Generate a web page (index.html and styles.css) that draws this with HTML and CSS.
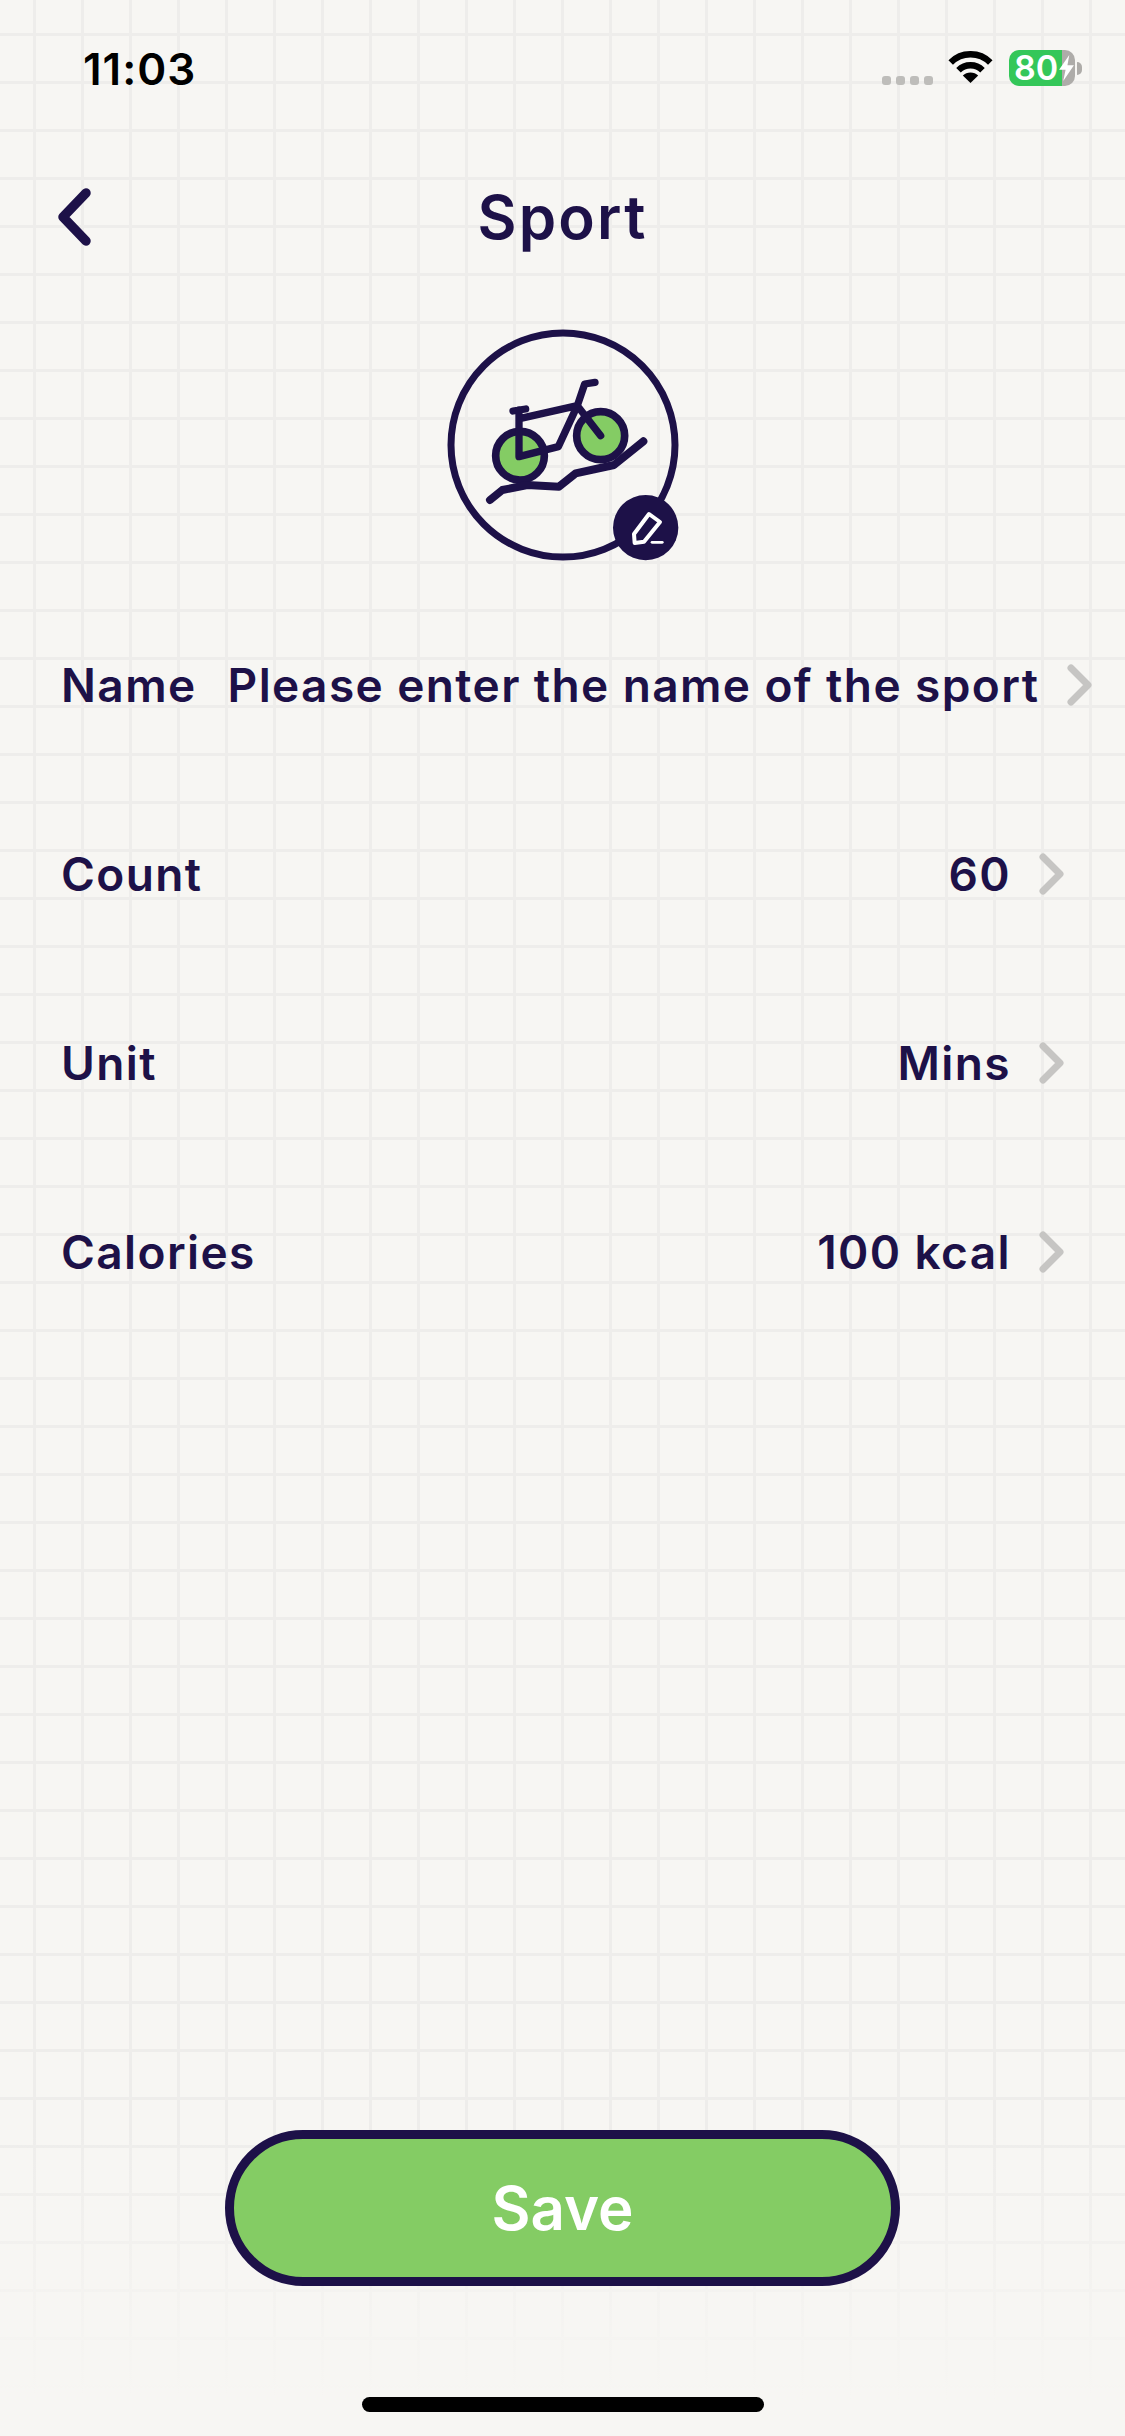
FILE: index.html
```html
<!DOCTYPE html>
<html lang="en">
<head>
<meta charset="utf-8">
<title>Sport</title>
<link rel="stylesheet" href="styles.css">
</head>
<body>
<main class="screen">
  <header class="status">
    <span class="time">11:03</span>
    <div class="status-icons">
      <div class="dots"><i></i><i></i><i></i><i></i></div>
      <svg class="wifi" viewBox="0 0 45 32" aria-hidden="true">
        <path d="M2.7 11.4A28 28 0 0 1 42.3 11.4M10.5 19.2A17 17 0 0 1 34.5 19.2" fill="none" stroke="#000" stroke-width="6.4"/>
        <path d="M22.5 32L14.8 24.6A11 11 0 0 1 30.2 24.6Z" fill="#000"/>
      </svg>
      <div class="battery">
        <div class="battery-body"><span class="battery-level">80</span>
          <svg class="bolt" viewBox="0 0 16 28" aria-hidden="true"><path d="M11 0L0 16H7L4.500 28L16 11H9Z" fill="#fff"/></svg>
        </div>
        <span class="battery-cap"></span>
      </div>
    </div>
  </header>

  <nav class="nav">
    <svg class="back" viewBox="0 0 36 62" aria-hidden="true"><path d="M28 7L5 31L28 55" fill="none" stroke="#1d1148" stroke-width="9.500" stroke-linecap="round" stroke-linejoin="round"/></svg>
    <h1 class="title">Sport</h1>
  </nav>

  <div class="avatar">
    <svg viewBox="-8 0 810 810" aria-hidden="true">
      <circle cx="397" cy="405" r="336" fill="none" stroke="#1d1148" stroke-width="21"/>
      <g fill="#84cc64" stroke="#1d1148" stroke-width="23">
        <circle cx="268" cy="437" r="73"/>
        <circle cx="510" cy="377" r="72"/>
      </g>
      <g fill="none" stroke="#1d1148" stroke-width="22" stroke-linecap="round" stroke-linejoin="round">
        <path d="M247 303L285 297M265 300V440L383 410L440 287M270 325L440 287L510 377M440 287L462 222L493 217"/>
        <path d="M178 570L215 540L290 525L385 530L435 490L550 465L638 394" stroke-width="24"/>
      </g>
      <circle cx="645" cy="653" r="98" fill="#1d1148"/>
      <g fill="none" stroke="#fff" stroke-width="12" stroke-linejoin="round" stroke-linecap="round">
        <path d="M610 672L655 612L688 636L640 695L612 699Z"/>
        <path d="M664 697H695" stroke-width="8"/>
      </g>
    </svg>
  </div>

  <section class="rows">
    <div class="row">
      <span class="label">Name</span>
      <span class="value">Please enter the name of the sport</span>
      <svg class="chev" viewBox="0 0 26 42" aria-hidden="true"><path d="M4 4L21 21L4 38" fill="none" stroke="#c6c5c3" stroke-width="7" stroke-linecap="round" stroke-linejoin="round"/></svg>
    </div>
    <div class="row">
      <span class="label">Count</span>
      <span class="value">60</span>
      <svg class="chev" viewBox="0 0 26 42" aria-hidden="true"><path d="M4 4L21 21L4 38" fill="none" stroke="#c6c5c3" stroke-width="7" stroke-linecap="round" stroke-linejoin="round"/></svg>
    </div>
    <div class="row">
      <span class="label">Unit</span>
      <span class="value">Mins</span>
      <svg class="chev" viewBox="0 0 26 42" aria-hidden="true"><path d="M4 4L21 21L4 38" fill="none" stroke="#c6c5c3" stroke-width="7" stroke-linecap="round" stroke-linejoin="round"/></svg>
    </div>
    <div class="row">
      <span class="label">Calories</span>
      <span class="value">100 kcal</span>
      <svg class="chev" viewBox="0 0 26 42" aria-hidden="true"><path d="M4 4L21 21L4 38" fill="none" stroke="#c6c5c3" stroke-width="7" stroke-linecap="round" stroke-linejoin="round"/></svg>
    </div>
  </section>

  <footer class="footer">
    <button class="save" type="button">Save</button>
    <div class="home"></div>
  </footer>
</main>
</body>
</html>
```
FILE: styles.css
```css
* { box-sizing: border-box; }
html, body { margin: 0; padding: 0; }
body {
  width: 1125px;
  height: 2436px;
  overflow: hidden;
  font-family: Inter, "Liberation Sans", sans-serif;
  color: #1d1148;
}
.screen {
  width: 1125px;
  height: 2436px;
  display: flex;
  flex-direction: column;
  background-color: #f7f6f3;
  background-image:
    linear-gradient(180deg, rgba(247,246,243,0) 2130px, rgba(247,246,243,.65) 2290px, #f7f6f3 2400px),
    linear-gradient(90deg, #eeedeb 3px, transparent 3px),
    linear-gradient(180deg, #eeedeb 3px, transparent 3px);
  background-size: 100% 100%, 48px 48px, 48px 48px;
  background-position: 0 0, 33px 0, 0 33px;
}
.status {
  height: 138px;
  flex: none;
  display: flex;
  align-items: center;
  justify-content: space-between;
  padding: 0 43px 0 83px;
}
.time {
  font-size: 44px;
  font-weight: 600;
  color: #000;
  letter-spacing: 1px;
}
.status-icons { display: flex; align-items: center; }
.dots { display: flex; gap: 5px; margin: 22px 15px 0 0; }
.dots i { width: 9px; height: 9px; border-radius: 3px; background: #bebdba; }
.wifi { width: 45px; height: 32px; margin: -4px 16px 0 0; }
.battery { display: flex; align-items: center; margin-top: -2px; }
.battery-body {
  width: 66px;
  height: 36px;
  border-radius: 10px;
  background: linear-gradient(90deg, #34c759 53px, #aeaca9 53px);
  display: flex;
  align-items: center;
  padding-left: 5px;
}
.battery-level { font-size: 34px; font-weight: 600; color: #fff; line-height: 36px; }
.bolt { flex: none; width: 15px; height: 26px; margin-left: 1px; }
.battery-cap {
  width: 5px;
  height: 13px;
  margin-left: 2px;
  border-radius: 0 6px 6px 0;
  background: #aeaca9;
}
.nav {
  height: 158px;
  flex: none;
  display: flex;
  align-items: center;
  justify-content: center;
  position: relative;
}
.back { position: absolute; left: 58px; top: 48px; width: 36px; height: 62px; }
.title { margin: 0; font-size: 60px; font-weight: 600; letter-spacing: 2.2px; }
.avatar { flex: none; height: 270px; margin-top: 14px; display: flex; justify-content: center; }
.avatar svg { width: 270px; height: 270px; display: block; }
.rows { flex: none; margin-top: 10px; }
.row {
  height: 189px;
  display: flex;
  align-items: center;
  padding: 0 60px 0 61px;
  font-size: 46px;
  font-weight: 600;
  letter-spacing: 1.4px;
  white-space: nowrap;
}
.label { flex: none; margin-right: auto; padding-right: 31px; }
.value { flex: none; }
.chev { flex: none; width: 26px; height: 42px; margin-left: 28px; }
.footer {
  margin-top: auto;
  display: flex;
  flex-direction: column;
  align-items: center;
  padding-bottom: 24px;
}
.save {
  width: 675px;
  height: 156px;
  border: 9px solid #1d1148;
  border-radius: 78px;
  background: #84cc64;
  color: #fff;
  font: 600 60px Inter, "Liberation Sans", sans-serif;
  padding: 0;
}
.home { width: 402px; height: 15px; margin-top: 111px; border-radius: 8px; background: #000; }
```
